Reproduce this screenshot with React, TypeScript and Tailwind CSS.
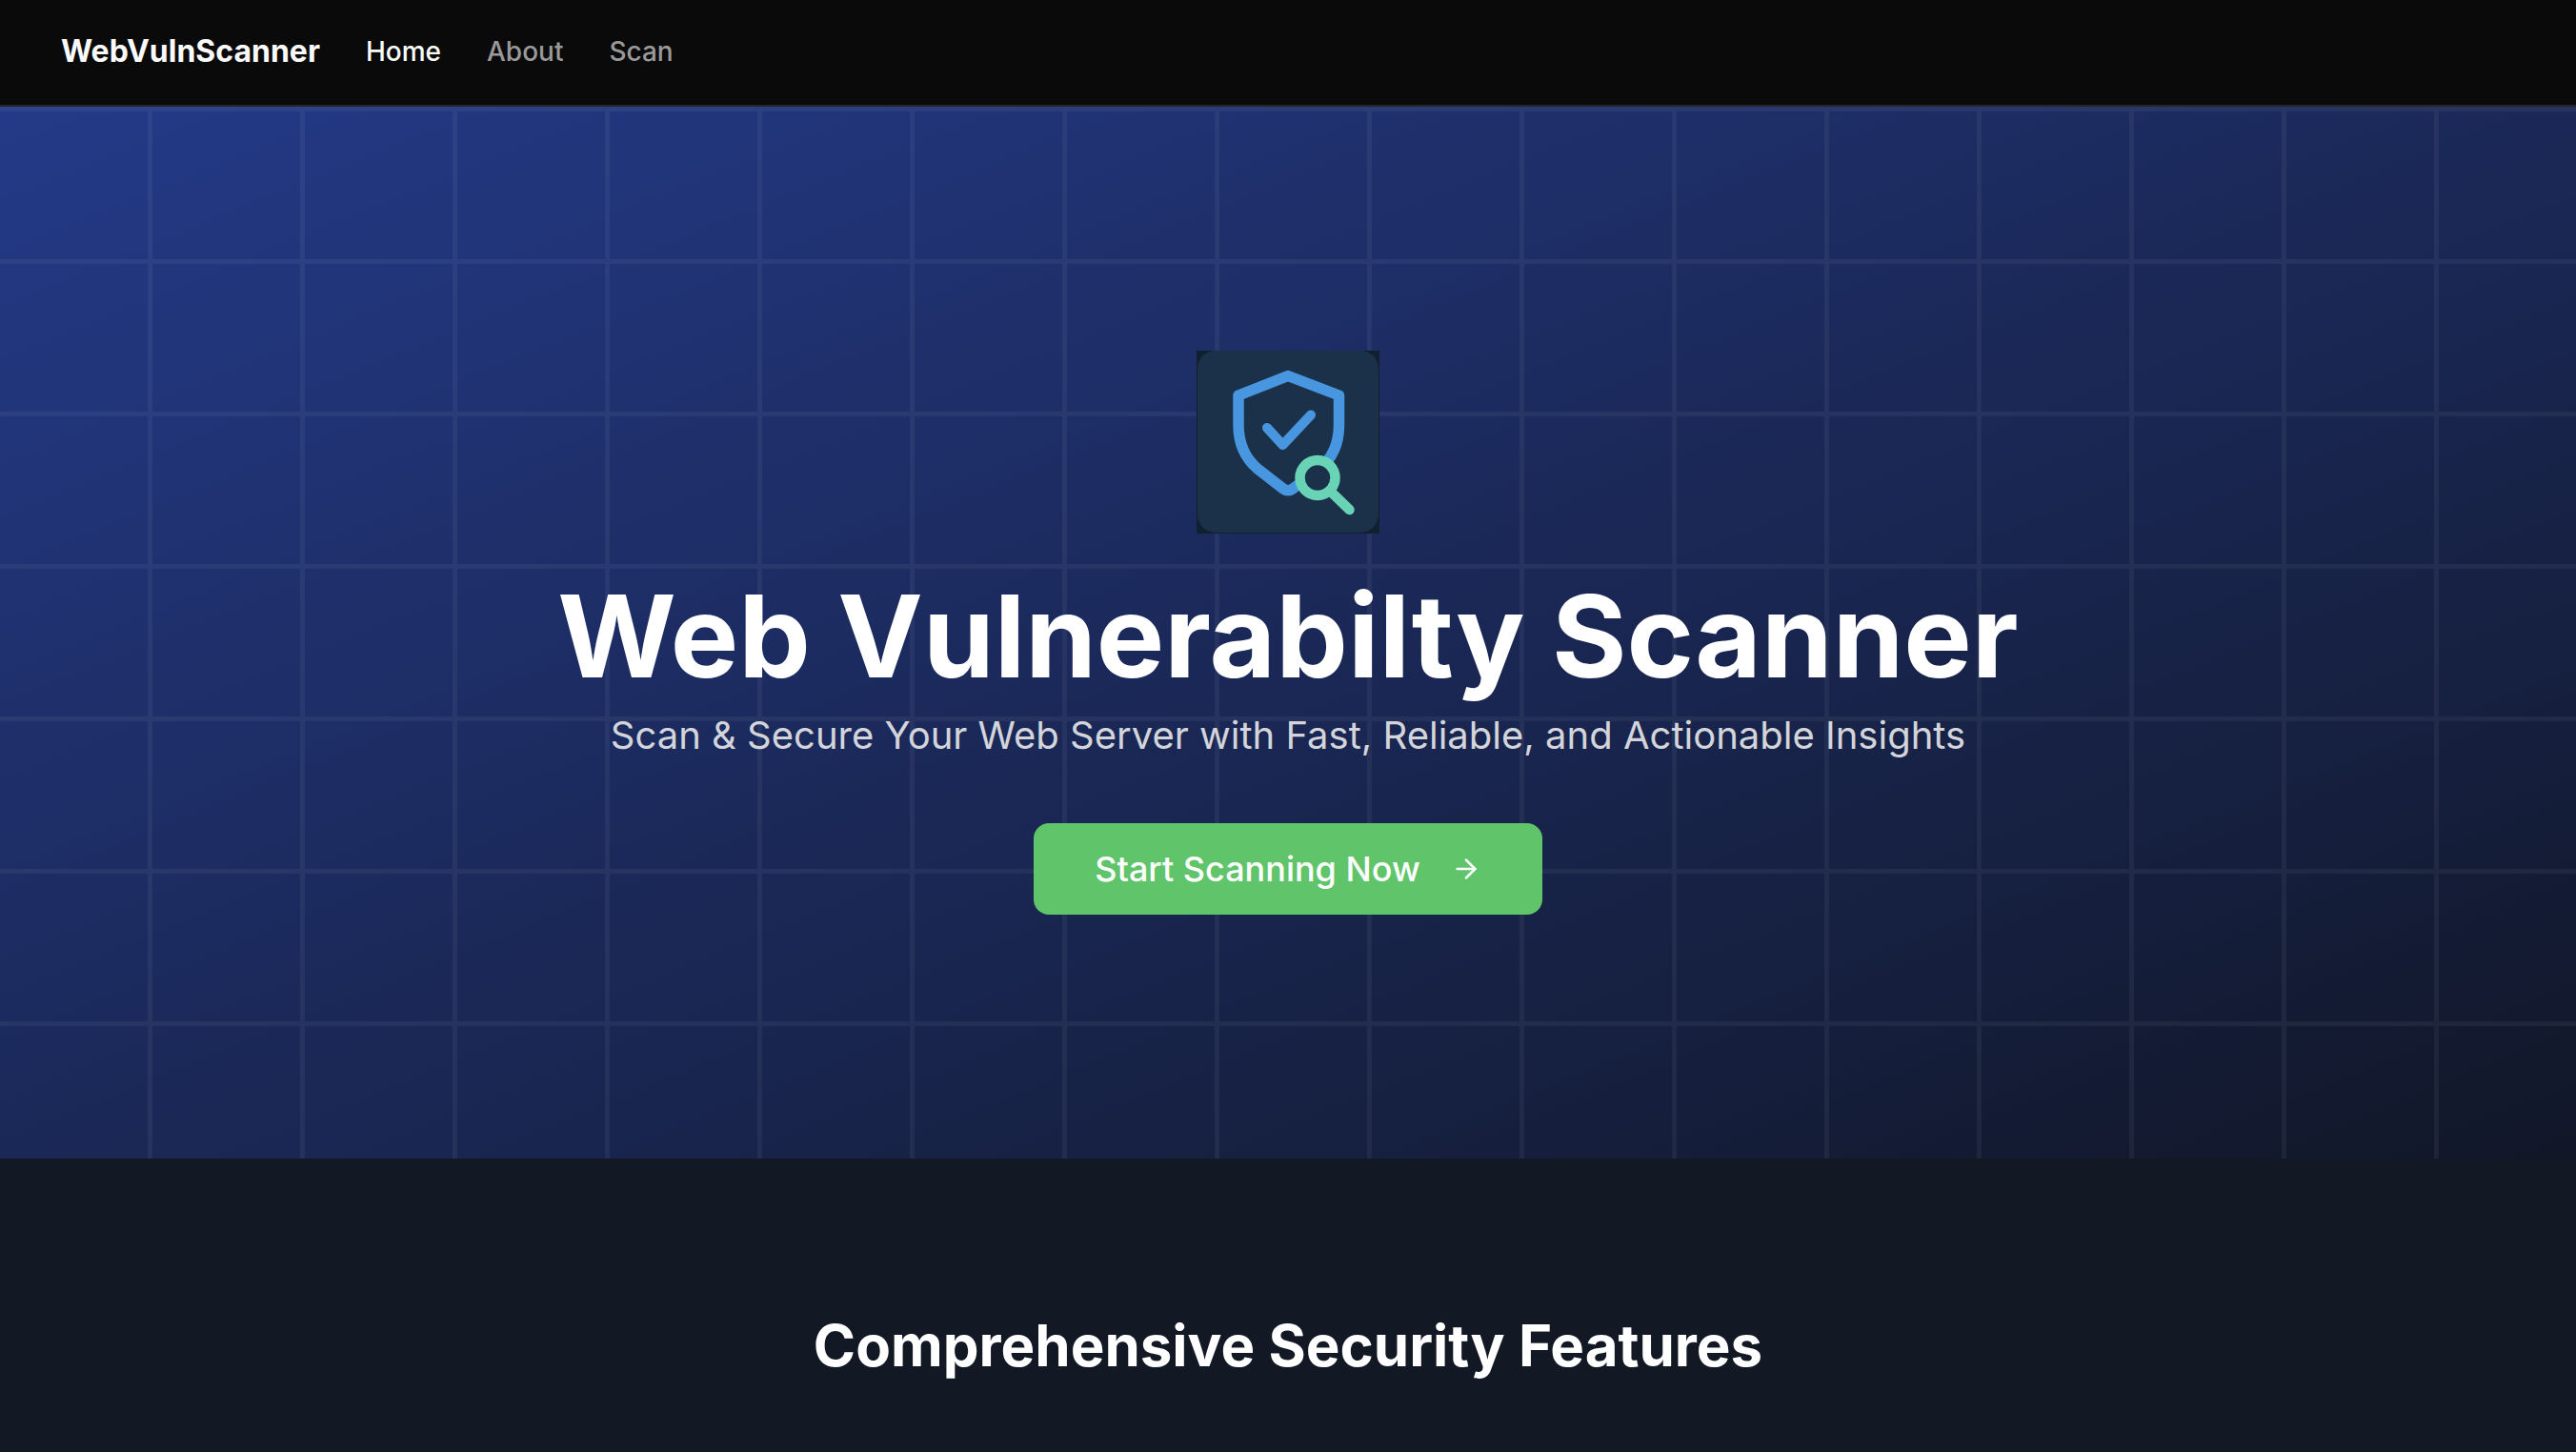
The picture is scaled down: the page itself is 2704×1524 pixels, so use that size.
import React from "react";
import { ArrowRight } from "lucide-react";

const links = [
  { label: "Home", href: "#home", active: true },
  { label: "About", href: "#about", active: false },
  { label: "Scan", href: "#scan", active: false },
];

function Header() {
  return (
    <header className="flex items-center gap-12 border-b-2 border-[#262626] bg-[#0a0a0a] px-16 pt-[31px] pb-[33px] text-[#fafafa]">
      <a href="#home" className="text-[32px] leading-[46px] font-bold">
        WebVulnScanner
      </a>
      <nav className="flex items-center gap-12">
        {links.map((link) => (
          <a
            key={link.label}
            href={link.href}
            aria-current={link.active ? "page" : undefined}
            className={
              link.active
                ? "text-[28px] leading-[46px] font-medium text-[#fafafa]"
                : "text-[28px] leading-[46px] font-medium text-[#999999]"
            }
          >
            {link.label}
          </a>
        ))}
      </nav>
    </header>
  );
}

function Logo() {
  return (
    <svg viewBox="0 0 192 192" className="size-48" role="img" aria-label="Shield with magnifier">
      <rect width="192" height="192" fill="#10202f" />
      <rect x="1" y="0" width="190" height="191" rx="19" fill="#1b3149" />
      <g fill="none" strokeLinecap="round" strokeLinejoin="round">
        <path
          d="M96 26.500 L149.500 47 V78 C149.500 99 142 114 128 125 L101 145 Q96 148.500 91 145 L64 124 C50 112 44 97 44 78 V47 Z"
          stroke="#4895e0"
          strokeWidth="11.500"
        />
        <path d="M74 81 L90.500 99 L120 67.500" stroke="#4895e0" strokeWidth="10" />
        <path d="M143 150 L160.500 167" stroke="#69d4b5" strokeWidth="10.500" />
        <circle cx="127" cy="133.500" r="18.500" fill="#1b3149" stroke="#69d4b5" strokeWidth="10.500" />
      </g>
    </svg>
  );
}

function Hero() {
  return (
    <section className="bg-linear-to-br/srgb from-[#243a88] to-[#111728]">
      <div className="flex flex-col items-center bg-[conic-gradient(from_180deg_at_155px_5px,transparent_0deg_90deg,rgba(255,255,255,0.05)_90deg)] bg-size-[160px_160px] px-16 py-64 text-center">
        <Logo />
        <h1 className="mt-12 text-[120px] leading-[120px] font-bold text-white">
          Web Vulnerabilty Scanner
        </h1>
        <p className="mt-4 text-[40px] leading-[56px] text-[#d3d5da]">
          Scan &amp; Secure Your Web Server with Fast, Reliable, and Actionable Insights
        </p>
        <button
          type="button"
          className="mt-16 flex h-24 items-center gap-8 rounded-2xl bg-[#60c46a] px-16 text-[36px] leading-[56px] font-medium text-white"
        >
          Start Scanning Now
          <ArrowRight className="size-8" aria-hidden="true" />
        </button>
      </div>
    </section>
  );
}

export default function App() {
  return (
    <div className="min-h-screen bg-[#121824] font-['Inter',sans-serif]">
      <Header />
      <main>
        <Hero />
        <section className="px-16 pt-40 pb-16 text-center">
          <h2 className="text-[60px] leading-[72px] font-bold text-white">
            Comprehensive Security Features
          </h2>
        </section>
      </main>
    </div>
  );
}
